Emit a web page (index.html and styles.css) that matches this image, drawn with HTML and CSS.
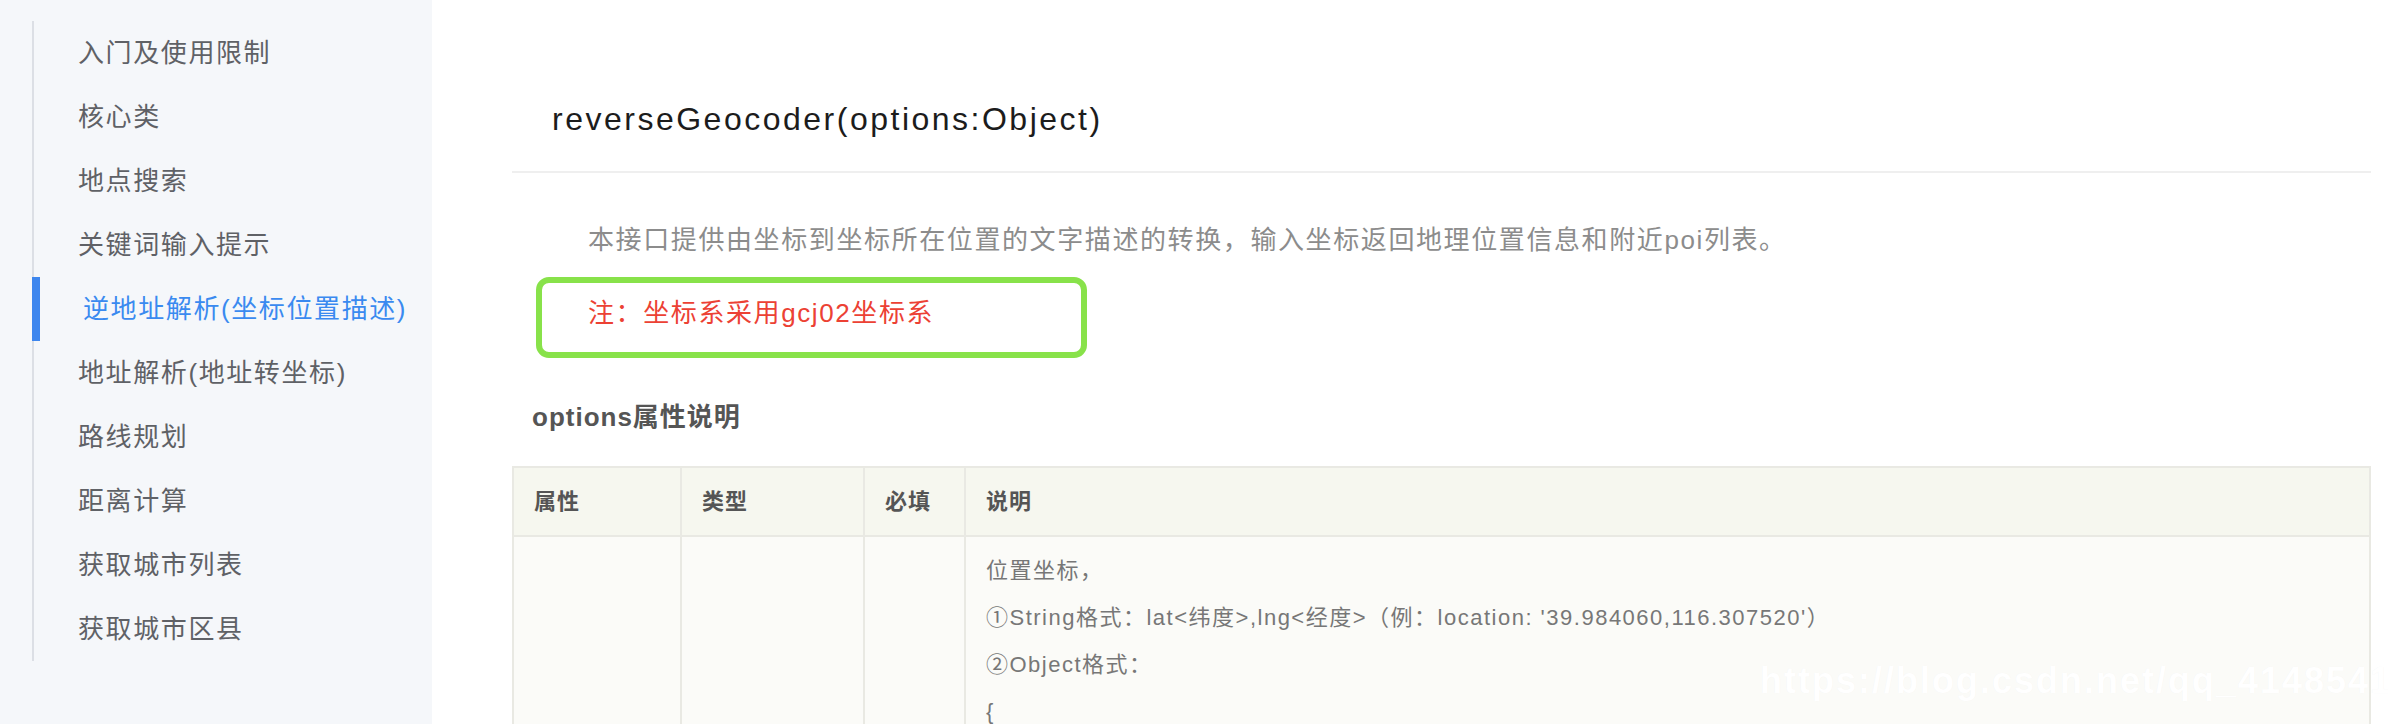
FILE: index.html
```html
<!DOCTYPE html>
<html lang="zh-CN">
<head>
<meta charset="utf-8">
<title>reverseGeocoder</title>
<link rel="stylesheet" href="styles.css">
</head>
<body>
<div class="page">
  <aside class="sidebar">
    <ul class="nav">
      <li class="nav-item">入门及使用限制</li>
      <li class="nav-item">核心类</li>
      <li class="nav-item">地点搜索</li>
      <li class="nav-item">关键词输入提示</li>
      <li class="nav-item active">逆地址解析(坐标位置描述)</li>
      <li class="nav-item">地址解析(地址转坐标)</li>
      <li class="nav-item">路线规划</li>
      <li class="nav-item">距离计算</li>
      <li class="nav-item">获取城市列表</li>
      <li class="nav-item">获取城市区县</li>
    </ul>
  </aside>
  <main class="main">
    <h1 class="title">reverseGeocoder(options:Object)</h1>
    <p class="desc">本接口提供由坐标到坐标所在位置的文字描述的转换，输入坐标返回地理位置信息和附近poi列表。</p>
    <div class="note">注：坐标系采用gcj02坐标系</div>
    <h2 class="section">options属性说明</h2>
    <table class="props">
      <colgroup>
        <col class="c1"><col class="c2"><col class="c3"><col>
      </colgroup>
      <thead>
        <tr><th>属性</th><th>类型</th><th>必填</th><th>说明</th></tr>
      </thead>
      <tbody>
        <tr>
          <td></td>
          <td></td>
          <td></td>
          <td>
            <div class="line">位置坐标，</div>
            <div class="line">①String格式：lat&lt;纬度&gt;,lng&lt;经度&gt;（例：location: '39.984060,116.307520'）</div>
            <div class="line">②Object格式：</div>
            <div class="line">{</div>
          </td>
        </tr>
      </tbody>
    </table>
  </main>
  <div class="watermark">https://blog.csdn.net/qq_41485414</div>
</div>
</body>
</html>
```

FILE: styles.css
```css
html, body {
  margin: 0;
  padding: 0;
  height: 100%;
  overflow: hidden;
  background: #ffffff;
}

body {
  font-family: "Liberation Sans", "Noto Sans CJK SC", sans-serif;
}

.page {
  position: relative;
  display: flex;
  height: 724px;
  overflow: hidden;
}

.sidebar {
  width: 432px;
  flex: none;
  background: #f5f7fa;
  padding-top: 21px;
  box-sizing: border-box;
}

.nav {
  list-style: none;
  margin: 0 0 0 32px;
  padding: 0;
  border-left: 2px solid #dcdfe5;
}

.nav-item {
  height: 64px;
  line-height: 64px;
  padding-left: 44px;
  font-size: 26px;
  letter-spacing: 1.6px;
  color: #5f6166;
  white-space: nowrap;
}

.nav-item.active {
  margin-left: -2px;
  border-left: 8px solid #3d86ee;
  padding-left: 43px;
  color: #3a8af0;
}

.main {
  flex: 1;
  min-width: 0;
  padding: 0 17px 0 80px;
}

.title {
  margin: 0;
  padding: 99px 0 32px 40px;
  font-size: 32px;
  line-height: 40px;
  font-weight: normal;
  letter-spacing: 2.5px;
  color: #1c1c1c;
  border-bottom: 2px solid #efefef;
}

.desc {
  margin: 47px 0 0 0;
  padding-left: 76px;
  font-size: 26px;
  line-height: 40px;
  letter-spacing: 1.6px;
  color: #8c8c8c;
  white-space: nowrap;
}

.note {
  margin: 17px 0 0 24px;
  width: 551px;
  height: 81px;
  box-sizing: border-box;
  border: 6px solid #88e24a;
  border-radius: 13px;
  padding: 10px 0 0 46px;
  font-size: 26px;
  line-height: 40px;
  letter-spacing: 1.6px;
  color: #ec4134;
}

.section {
  margin: 39px 0 0 20px;
  font-size: 26px;
  line-height: 40px;
  font-weight: bold;
  letter-spacing: 1px;
  color: #555555;
}

.props {
  margin-top: 29px;
  width: 100%;
  border-collapse: collapse;
  table-layout: fixed;
  background: #fbfbf8;
}

.props .c1 { width: 168px; }
.props .c2 { width: 183px; }
.props .c3 { width: 101px; }

.props th,
.props td {
  border: 2px solid #e9e9e3;
  text-align: left;
  vertical-align: top;
}

.props th {
  background: #f6f7ef;
  padding: 13px 20px;
  line-height: 41px;
  font-size: 22px;
  font-weight: bold;
  letter-spacing: 1px;
  color: #555555;
}

.props td {
  height: 200px;
  padding: 10px 20px 0 20px;
  font-size: 22px;
  letter-spacing: 1.5px;
  color: #777777;
}

.line {
  line-height: 47px;
  white-space: nowrap;
}

.watermark {
  position: absolute;
  left: 1760px;
  top: 660px;
  font-size: 36px;
  font-weight: bold;
  letter-spacing: 2px;
  color: #ffffff;
  text-shadow: 0 0 1px rgba(0, 0, 0, 0.04);
  white-space: nowrap;
}
```
